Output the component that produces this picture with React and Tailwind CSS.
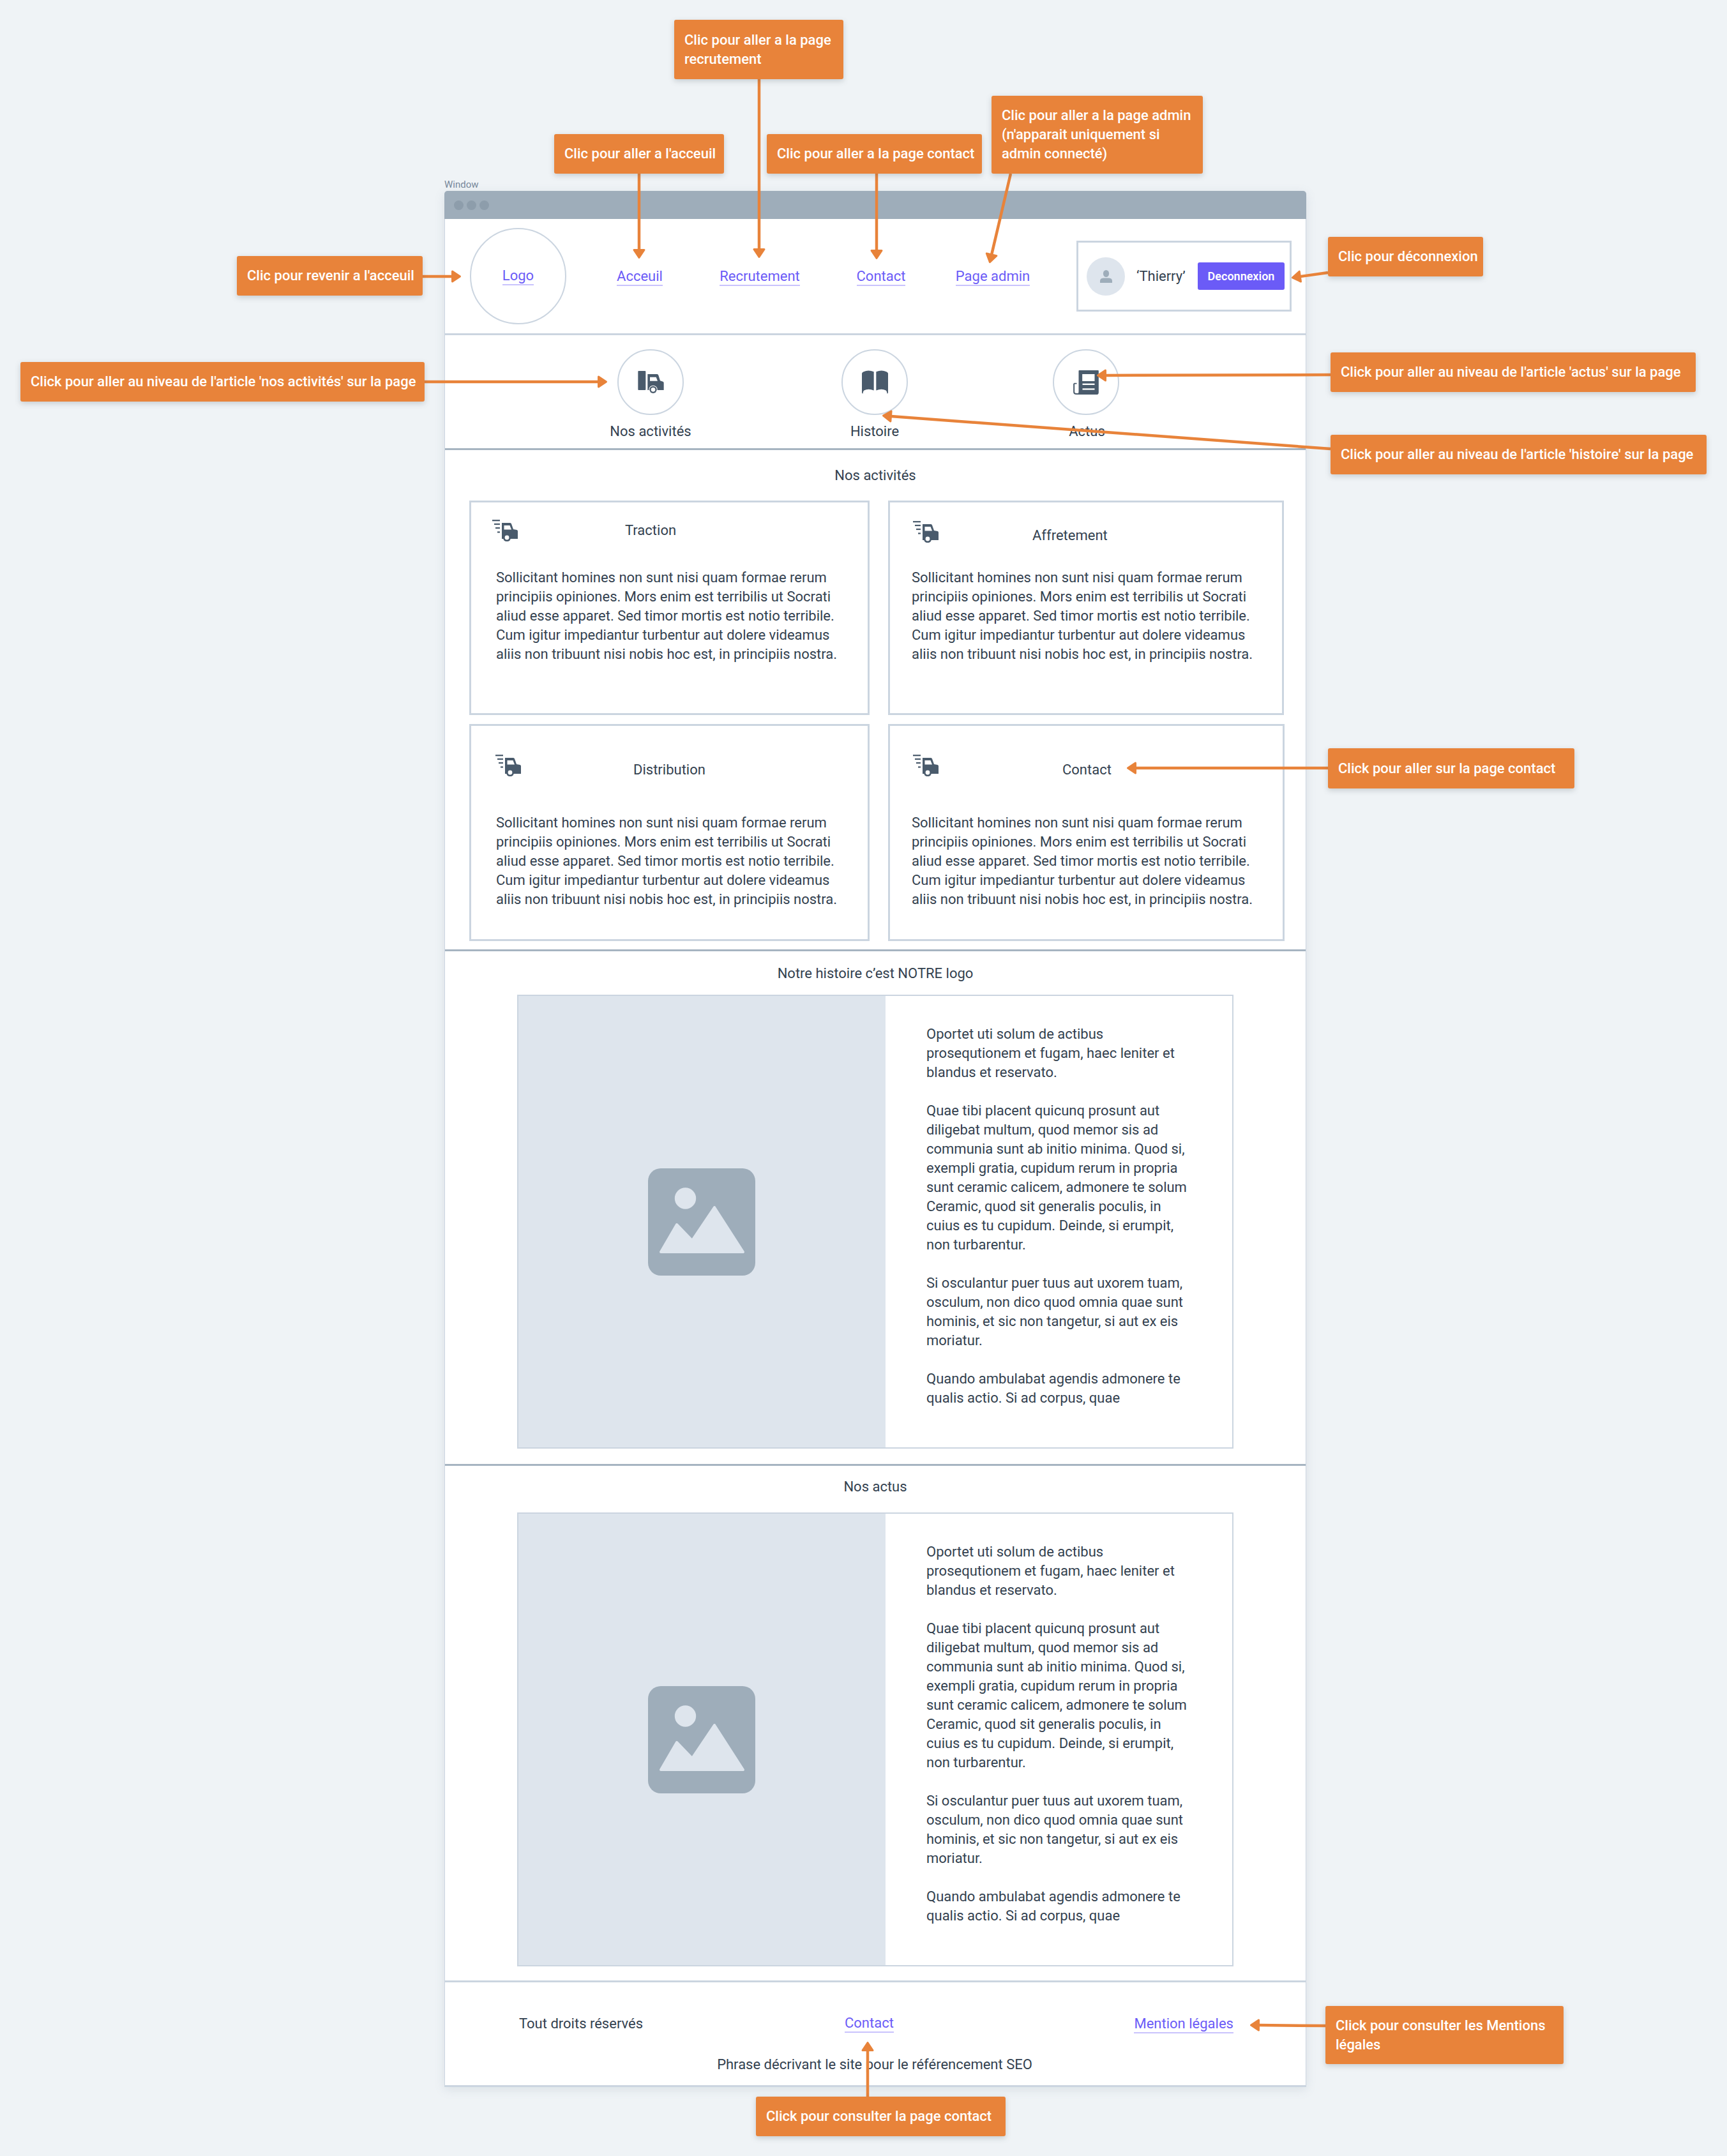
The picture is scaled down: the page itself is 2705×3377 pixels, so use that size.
import React from "react";

const ICON = "#4a5b6c";
const ORANGE = "#e8833a";

function NavTruck() {
  return (
    <svg width="41" height="35" viewBox="0 0 121 105">
      <rect x="0" y="0" width="36" height="90" rx="3" fill={ICON} />
      <path d="M45 15 L90 15 Q94 15 96 20 L104 46 L117 50 Q121 52 121 56 L121 90 L45 90 Z" fill={ICON} />
      <path d="M56 29 L85 29 L92 47 L56 47 Z" fill="#fff" />
      <circle cx="71" cy="88" r="20" fill="#fff" />
      <circle cx="71" cy="88" r="17" fill={ICON} />
      <circle cx="71" cy="88" r="10" fill="#fff" />
    </svg>
  );
}

function CardTruck() {
  return (
    <svg width="40" height="34" viewBox="0 0 40 34">
      <g stroke={ICON} strokeWidth="2.2">
        <line x1="0" y1="1.2" x2="12" y2="1.2" />
        <line x1="3" y1="7" x2="12" y2="7" />
        <line x1="5" y1="13" x2="12" y2="13" />
        <line x1="8" y1="19.5" x2="12" y2="19.5" />
      </g>
      <path d="M15 5 L28 5 Q29.5 5 30 6.5 L33 15 L38.5 16 Q40 16.5 40 18 L40 30 L15 30 Z" fill={ICON} />
      <path d="M18.5 9 L27.5 9 L30 15.5 L18.5 15.5 Z" fill="#fff" />
      <circle cx="23" cy="28" r="6.2" fill={ICON} />
      <circle cx="23" cy="28" r="3.4" fill="#fff" />
    </svg>
  );
}

function Book() {
  return (
    <svg width="41" height="37" viewBox="0 0 123 110">
      <path d="M0 14 Q2 8 8 6 Q30 -4 56 6 L56 94 Q30 84 10 94 Q5 98 4 110 L0 106 Z" fill={ICON} />
      <path d="M123 14 Q121 8 115 6 Q93 -4 67 6 L67 94 Q93 84 113 94 Q118 98 119 110 L123 106 Z" fill={ICON} />
    </svg>
  );
}

function News() {
  return (
    <svg width="40" height="38" viewBox="0 0 119 114">
      <path d="M3 62 L3 102 Q3 111 14 111 L30 111" fill="none" stroke={ICON} strokeWidth="6" />
      <path d="M3 62 L16 62" fill="none" stroke={ICON} strokeWidth="5" />
      <path d="M25 3 Q25 0 28 0 L116 0 Q119 0 119 3 L119 104 Q119 114 109 114 L20 114 Q25 110 25 100 Z" fill={ICON} />
      <rect x="42" y="18" width="58" height="33" fill="#fff" />
      <rect x="43" y="62" width="57" height="7" fill="#fff" />
      <rect x="43" y="85" width="57" height="7" fill="#fff" />
    </svg>
  );
}

function ImageIcon() {
  return (
    <svg width="168" height="168" viewBox="0 0 168 168">
      <rect width="168" height="168" rx="20" fill="#9eadba" />
      <circle cx="58.5" cy="47" r="16.7" fill="#dee5ed" />
      <path d="M20 131 L45 88 L69 113 L104 61 L149 131 Z" fill="#dee5ed" stroke="#dee5ed" strokeWidth="4" strokeLinejoin="round" />
    </svg>
  );
}

function Person() {
  return (
    <svg width="19" height="20" viewBox="0 0 19 20">
      <ellipse cx="9.5" cy="5.5" rx="4.6" ry="5.5" fill="#9eadba" />
      <path d="M0 20 L0 17 Q0 13 5 12.6 L14 12.6 Q19 13 19 17 L19 20 Z" fill="#9eadba" />
    </svg>
  );
}

function Link({ children }) {
  return <span className="text-[#6b5bf7] border-b-[2px] border-[#c9c3fd] leading-[26px] inline-block whitespace-nowrap">{children}</span>;
}

const cardText = (
  <>
    Sollicitant homines non sunt nisi quam formae rerum<br />
    principiis opiniones. Mors enim est terribilis ut Socrati<br />
    aliud esse apparet. Sed timor mortis est notio terribile.<br />
    Cum igitur impediantur turbentur aut dolere videamus<br />
    aliis non tribuunt nisi nobis hoc est, in principiis nostra.
  </>
);

function Card({ box, head, icon, title, titleCls, text }) {
  return (
    <div className={"border-[3px] border-[#cbd5e0] " + box}>
      <div className={"flex items-center " + head}>
        <div className={icon}><CardTruck /></div>
        <span className={titleCls}>{title}</span>
      </div>
      <p className={"leading-[30px] whitespace-nowrap " + text}>{cardText}</p>
    </div>
  );
}

function Panel({ className }) {
  return (
    <div className={"w-[1122px] h-[711px] flex border-[2px] border-[#cbd5e0] " + className}>
      <div className="w-[575px] pr-[2px] bg-[#dee5ed] flex items-center justify-center">
        <ImageIcon />
      </div>
      <div className="pl-[64px] pt-[45px] leading-[30px] whitespace-nowrap">
        <p className="mb-[30px]">
          Oportet uti solum de actibus<br />
          prosequtionem et fugam, haec leniter et<br />
          blandus et reservato.
        </p>
        <p className="mb-[30px]">
          Quae tibi placent quicunq prosunt aut<br />
          diligebat multum, quod memor sis ad<br />
          communia sunt ab initio minima. Quod si,<br />
          exempli gratia, cupidum rerum in propria<br />
          sunt ceramic calicem, admonere te solum<br />
          Ceramic, quod sit generalis poculis, in<br />
          cuius es tu cupidum. Deinde, si erumpit,<br />
          non turbarentur.
        </p>
        <p className="mb-[30px]">
          Si osculantur puer tuus aut uxorem tuam,<br />
          osculum, non dico quod omnia quae sunt<br />
          hominis, et sic non tangetur, si aut ex eis<br />
          moriatur.
        </p>
        <p>
          Quando ambulabat agendis admonere te<br />
          qualis actio. Si ad corpus, quae
        </p>
      </div>
    </div>
  );
}

const callouts = [
  ["left-[1056px] top-[31px] w-[265px] h-[93px]", <>Clic pour aller a la page<br />recrutement</>],
  ["left-[868px] top-[210px] w-[266px] h-[62px]", "Clic pour aller a l'acceuil"],
  ["left-[1201px] top-[210px] w-[337px] h-[62px]", "Clic pour aller a la page contact"],
  ["left-[1553px] top-[150px] w-[331px] h-[122px]", <>Clic pour aller a la page admin<br />(n'apparait uniquement si<br />admin connecté)</>],
  ["left-[371px] top-[401px] w-[291px] h-[62px]", "Clic pour revenir a l'acceuil"],
  ["left-[32px] top-[567px] w-[633px] h-[62px]", "Click pour aller au niveau de l'article 'nos activités' sur la page"],
  ["left-[2080px] top-[371px] w-[243px] h-[62px]", "Clic pour déconnexion"],
  ["left-[2084px] top-[552px] w-[572px] h-[62px]", "Click pour aller au niveau de l'article 'actus' sur la page"],
  ["left-[2084px] top-[681px] w-[589px] h-[62px]", "Click pour aller au niveau de l'article 'histoire' sur la page"],
  ["left-[2080px] top-[1172px] w-[386px] h-[63px]", "Click pour aller sur la page contact"],
  ["left-[2076px] top-[3142px] w-[373px] h-[91px]", <>Click pour consulter les Mentions<br />légales</>],
  ["left-[1184px] top-[3284px] w-[391px] h-[62px]", "Click pour consulter la page contact"],
];

const arrows = [
  [1189, 124, 1189, 404],
  [1001, 272, 1001, 405],
  [1373, 272, 1373, 406],
  [1583, 272, 1550, 412],
  [662, 433, 722, 433],
  [665, 598, 951, 598],
  [2080, 427, 2023, 435],
  [2084, 587, 1718, 588],
  [2084, 703, 1382, 651],
  [2080, 1203, 1765, 1203],
  [2076, 3173, 1958, 3172],
  [1359, 3284, 1359, 3198],
];

function Arrows() {
  return (
    <svg className="absolute left-0 top-0 pointer-events-none" width="2705" height="3377">
      {arrows.map(([x1, y1, x2, y2], i) => {
        const dx = x2 - x1, dy = y2 - y1, len = Math.hypot(dx, dy);
        const ux = dx / len, uy = dy / len;
        const L = 12, W = 8;
        const bx = x2 - ux * (L + 1.5), by = y2 - uy * (L + 1.5);
        const tx = x2 - ux * 1.5, ty = y2 - uy * 1.5;
        const pts = `${tx},${ty} ${bx - uy * W},${by + ux * W} ${bx + uy * W},${by - ux * W}`;
        return (
          <g key={i}>
            <line x1={x1} y1={y1} x2={bx} y2={by} stroke={ORANGE} strokeWidth="4.5" />
            <polygon points={pts} fill={ORANGE} stroke={ORANGE} strokeWidth="3" strokeLinejoin="round" />
          </g>
        );
      })}
    </svg>
  );
}

export default function App() {
  return (
    <div className="relative w-[2705px] h-[3377px] overflow-hidden bg-[#eff3f6] font-[Roboto,sans-serif] text-[22px] text-[#33414f]">
      <div className="pl-[696px] pt-[280px]">
        <div className="h-[19px] text-[15px] leading-[19px] text-[#76879a]">Window</div>
        <div className="w-[1350px] shadow-[0_4px_16px_rgba(100,120,140,0.15)] rounded-t-[5px]">
          <div className="h-[44px] bg-[#9eadba] rounded-t-[5px] flex items-center pl-[15px] gap-[5px]">
            <div className="w-[15px] h-[15px] rounded-full bg-[#8d9dab]" />
            <div className="w-[15px] h-[15px] rounded-full bg-[#8d9dab]" />
            <div className="w-[15px] h-[15px] rounded-full bg-[#8d9dab]" />
          </div>
          <div className="bg-white border-x border-[#cbd5e0]">
            <header className="h-[182px] border-b-[3px] border-[#cbd5e0] flex items-center pl-[39px]">
              <div className="w-[151px] h-[151px] rounded-full border-[2px] border-[#cbd5e0] flex items-center justify-center"><Link>Logo</Link></div>
              <div className="w-[160px] ml-[35px] text-center"><Link>Acceuil</Link></div>
              <div className="w-[160px] ml-[28px] text-center"><Link>Recrutement</Link></div>
              <div className="w-[160px] ml-[30px] text-center"><Link>Contact</Link></div>
              <div className="w-[160px] ml-[15px] text-center"><Link>Page admin</Link></div>
              <div className="w-[337px] h-[111px] ml-[51px] border-[3px] border-[#cbd5e0] flex items-center pl-[13px]">
                <div className="w-[60px] h-[60px] rounded-full bg-[#dee5ed] flex items-center justify-center"><Person /></div>
                <span className="ml-[18px] w-[96px]">‘Thierry’</span>
                <button className="w-[136px] h-[43px] rounded-[3px] bg-[#6b5bf7] text-white text-[18px] font-semibold">Deconnexion</button>
              </div>
            </header>
            <nav className="h-[180px] border-b-[3px] border-[#a6b4c1] relative">
              <div className="flex pt-[22px] pl-[252px]">
                <div className="w-[140px] flex flex-col items-center">
                  <div className="w-[104px] h-[103px] rounded-full border-[2px] border-[#cbd5e0] flex items-center justify-center"><NavTruck /></div>
                  <span className="mt-[13px] leading-[26px] whitespace-nowrap">Nos activités</span>
                </div>
                <div className="w-[140px] ml-[211px] flex flex-col items-center">
                  <div className="w-[104px] h-[103px] rounded-full border-[2px] border-[#cbd5e0] flex items-center justify-center"><Book /></div>
                  <span className="mt-[13px] leading-[26px]">Histoire</span>
                </div>
                <div className="w-[140px] ml-[191px] flex flex-col items-center">
                  <div className="w-[104px] h-[103px] rounded-full border-[2px] border-[#cbd5e0] flex items-center justify-center"><News /></div>
                  <span className="mt-[13px] ml-[3px] leading-[26px]">Actus</span>
                </div>
              </div>
            </nav>
            <section className="h-[785px] border-b-[3px] border-[#a6b4c1]">
              <div className="h-[79px] pt-[27px] text-center leading-[26px]">Nos activités</div>
              <div className="flex pl-[38px] gap-[29px]">
                <Card box="w-[627px] h-[336px]" head="h-[103px] pl-[33px] pb-[16px]" icon="" title="Traction" titleCls="ml-[168px]" text="pl-[39px]" />
                <Card box="w-[620px] h-[336px]" head="h-[103px] pl-[36px] pb-[4px]" icon="mb-[8px]" title="Affretement" titleCls="ml-[147px] mt-[4px]" text="pl-[34px]" />
              </div>
              <div className="flex pl-[38px] gap-[29px] mt-[14px]">
                <Card box="w-[627px] h-[340px]" head="h-[137px] pl-[38px]" icon="mb-[14px]" title="Distribution" titleCls="ml-[176px]" text="pl-[39px]" />
                <Card box="w-[621px] h-[340px]" head="h-[137px] pl-[36px]" icon="mb-[14px]" title="Contact" titleCls="ml-[194px]" text="pl-[34px]" />
              </div>
            </section>
            <section className="h-[806px] border-b-[3px] border-[#a6b4c1]">
              <div className="h-[68px] pt-[22px] text-center leading-[26px]">Notre histoire c’est NOTRE logo</div>
              <Panel className="ml-[113px]" />
            </section>
            <section className="h-[809px] border-b-[3px] border-[#cbd5e0]">
              <div className="h-[73px] pt-[20px] text-center leading-[26px]">Nos actus</div>
              <Panel className="ml-[113px]" />
            </section>
            <footer className="h-[164px] border-b-[3px] border-[#cbd5e0]">
              <div className="flex items-center pt-[48px] pl-[116px]">
                <span className="w-[510px] whitespace-nowrap">Tout droits réservés</span>
                <Link>Contact</Link>
                <div className="w-[532px] text-right"><Link>Mention légales</Link></div>
              </div>
              <div className="mt-[35px] text-center leading-[26px] pr-[2px]">Phrase décrivant le site pour le référencement SEO</div>
            </footer>
          </div>
        </div>
      </div>

      <Arrows />

      {callouts.map(([pos, txt], i) => (
        <div key={i} className={"absolute flex items-center pl-[16px] bg-[#e8833a] rounded-[3px] shadow-[0_3px_8px_rgba(80,90,100,0.25)] text-white font-medium leading-[30px] whitespace-nowrap " + pos}>
          <span>{txt}</span>
        </div>
      ))}
    </div>
  );
}
